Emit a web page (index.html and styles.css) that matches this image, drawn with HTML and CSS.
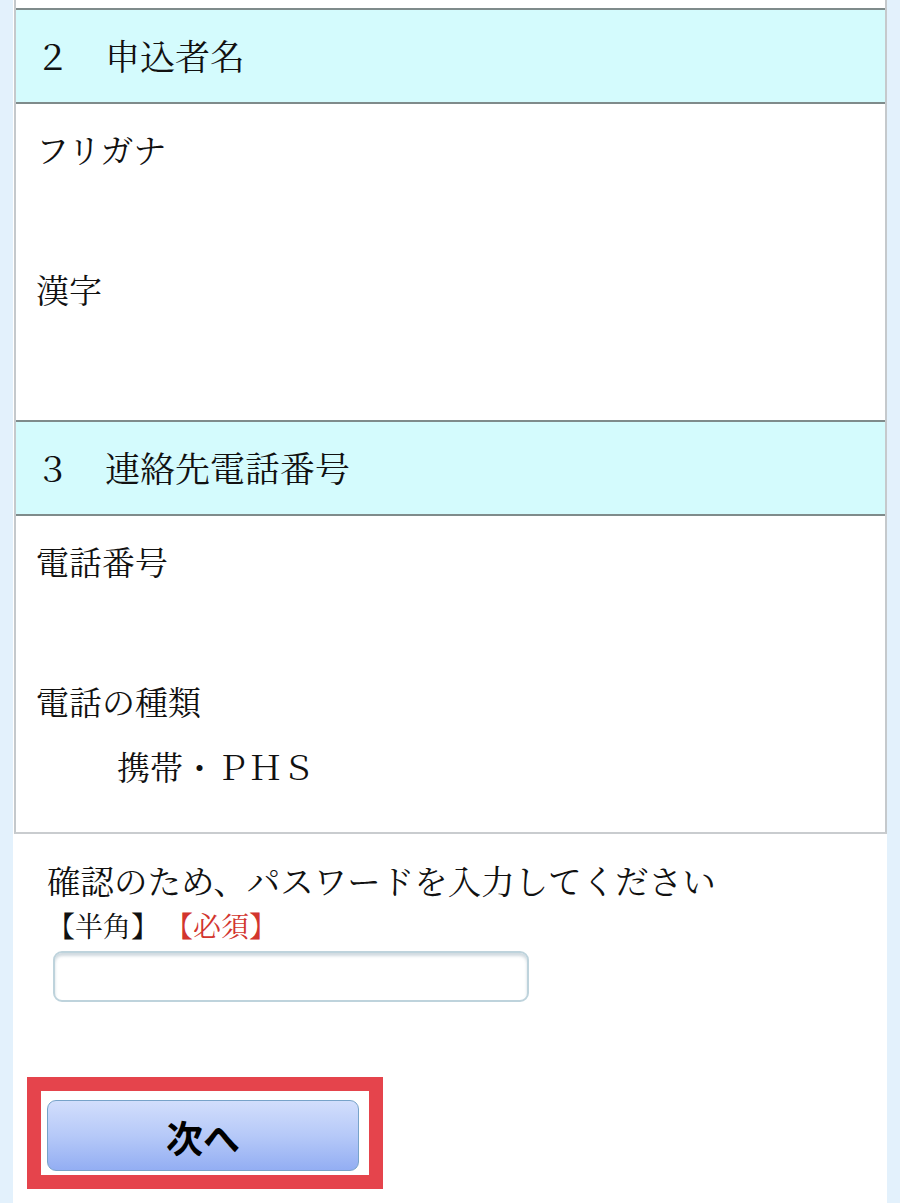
FILE: index.html
```html
<!DOCTYPE html>
<html lang="ja">
<head>
<meta charset="utf-8">
<title>申込内容確認</title>
<link rel="stylesheet" href="styles.css">
</head>
<body>
<div class="page">
  <div class="table">
    <div class="prev-row"></div>
    <div class="sec-head">２　申込者名</div>
    <div class="sec-body">
      <div class="field">
        <div class="label">フリガナ</div>
        <div class="value"></div>
      </div>
      <div class="field">
        <div class="label">漢字</div>
        <div class="value"></div>
      </div>
    </div>
    <div class="sec-head">３　連絡先電話番号</div>
    <div class="sec-body">
      <div class="field">
        <div class="label">電話番号</div>
        <div class="value"></div>
      </div>
      <div class="field">
        <div class="label">電話の種類</div>
        <div class="value">携帯・ＰＨＳ</div>
      </div>
    </div>
  </div>
  <div class="confirm">
    <div class="confirm-label">確認のため、パスワードを入力してください</div>
    <div class="notes">【半角】<span class="req">【必須】</span></div>
    <input class="pw" type="password">
    <div class="highlight">
      <button class="next" type="button">次へ</button>
    </div>
  </div>
</div>
</body>
</html>
```

FILE: styles.css
```css
html, body {
  margin: 0;
  padding: 0;
}
body {
  background: #e3f1fc;
  font-family: "Noto Serif CJK JP", "Liberation Serif", "Noto Sans CJK JP", serif;
  color: #111;
  height: 1203px;
  overflow: hidden;
  text-spacing-trim: space-all;
}
.page {
  margin-left: 13px;
  width: 874px;
  background: #fff;
  min-height: 1203px;
}
.table {
  border-left: 2px solid #c5c9cc;
  border-right: 2px solid #c5c9cc;
  border-bottom: 2px solid #c9cccf;
  margin-left: 1px;
  width: 869px;
}
.prev-row {
  height: 8px;
  background: #fff;
}
.sec-head {
  background: #d4fbfd;
  border-top: 2px solid #7f8b8b;
  border-bottom: 2px solid #7f8b8b;
  height: 92px;
  line-height: 90px;
  font-size: 35px;
  padding-left: 19px;
}
.sec-body {
  padding: 13px 0 33px 20px;
  display: flex;
  flex-direction: column;
  gap: 10px;
}
.field .label {
  height: 64px;
  line-height: 64px;
  font-size: 33px;
}
.field .value {
  height: 66px;
  line-height: 66px;
  font-size: 33px;
  padding-left: 81px;
}
.confirm {
  padding: 24px 0 0 34px;
}
.confirm-label {
  font-size: 33.5px;
  line-height: 44px;
}
.notes {
  font-size: 28px;
  line-height: 38px;
  margin-top: 4px;
}
.req {
  color: #d2352e;
  margin-left: 6px;
}
.pw {
  display: block;
  margin: 7px 0 0 6px;
  width: 476px;
  height: 51px;
  box-sizing: border-box;
  border: 2px solid #bed3dc;
  border-radius: 9px;
  background: #fff;
  box-shadow: inset 0 3px 3px rgba(120, 150, 165, 0.35);
  outline: none;
}
.highlight {
  margin: 75px 0 0 -20px;
  width: 328px;
  height: 84px;
  border: 14px solid #e5444c;
  box-sizing: content-box;
  padding: 0;
  display: flex;
}
.next {
  margin: 9px 0 0 6px;
  width: 312px;
  height: 71px;
  border: 1px solid #77a3c9;
  border-radius: 9px;
  background: linear-gradient(to bottom, #d2defc 0%, #b6c9f8 50%, #93aef3 100%);
  font-family: "Noto Sans CJK JP", "Liberation Sans", sans-serif;
  font-weight: bold;
  font-size: 37px;
  color: #000;
  padding: 4px 0 0 0;
  line-height: 1;
  cursor: pointer;
}
```
